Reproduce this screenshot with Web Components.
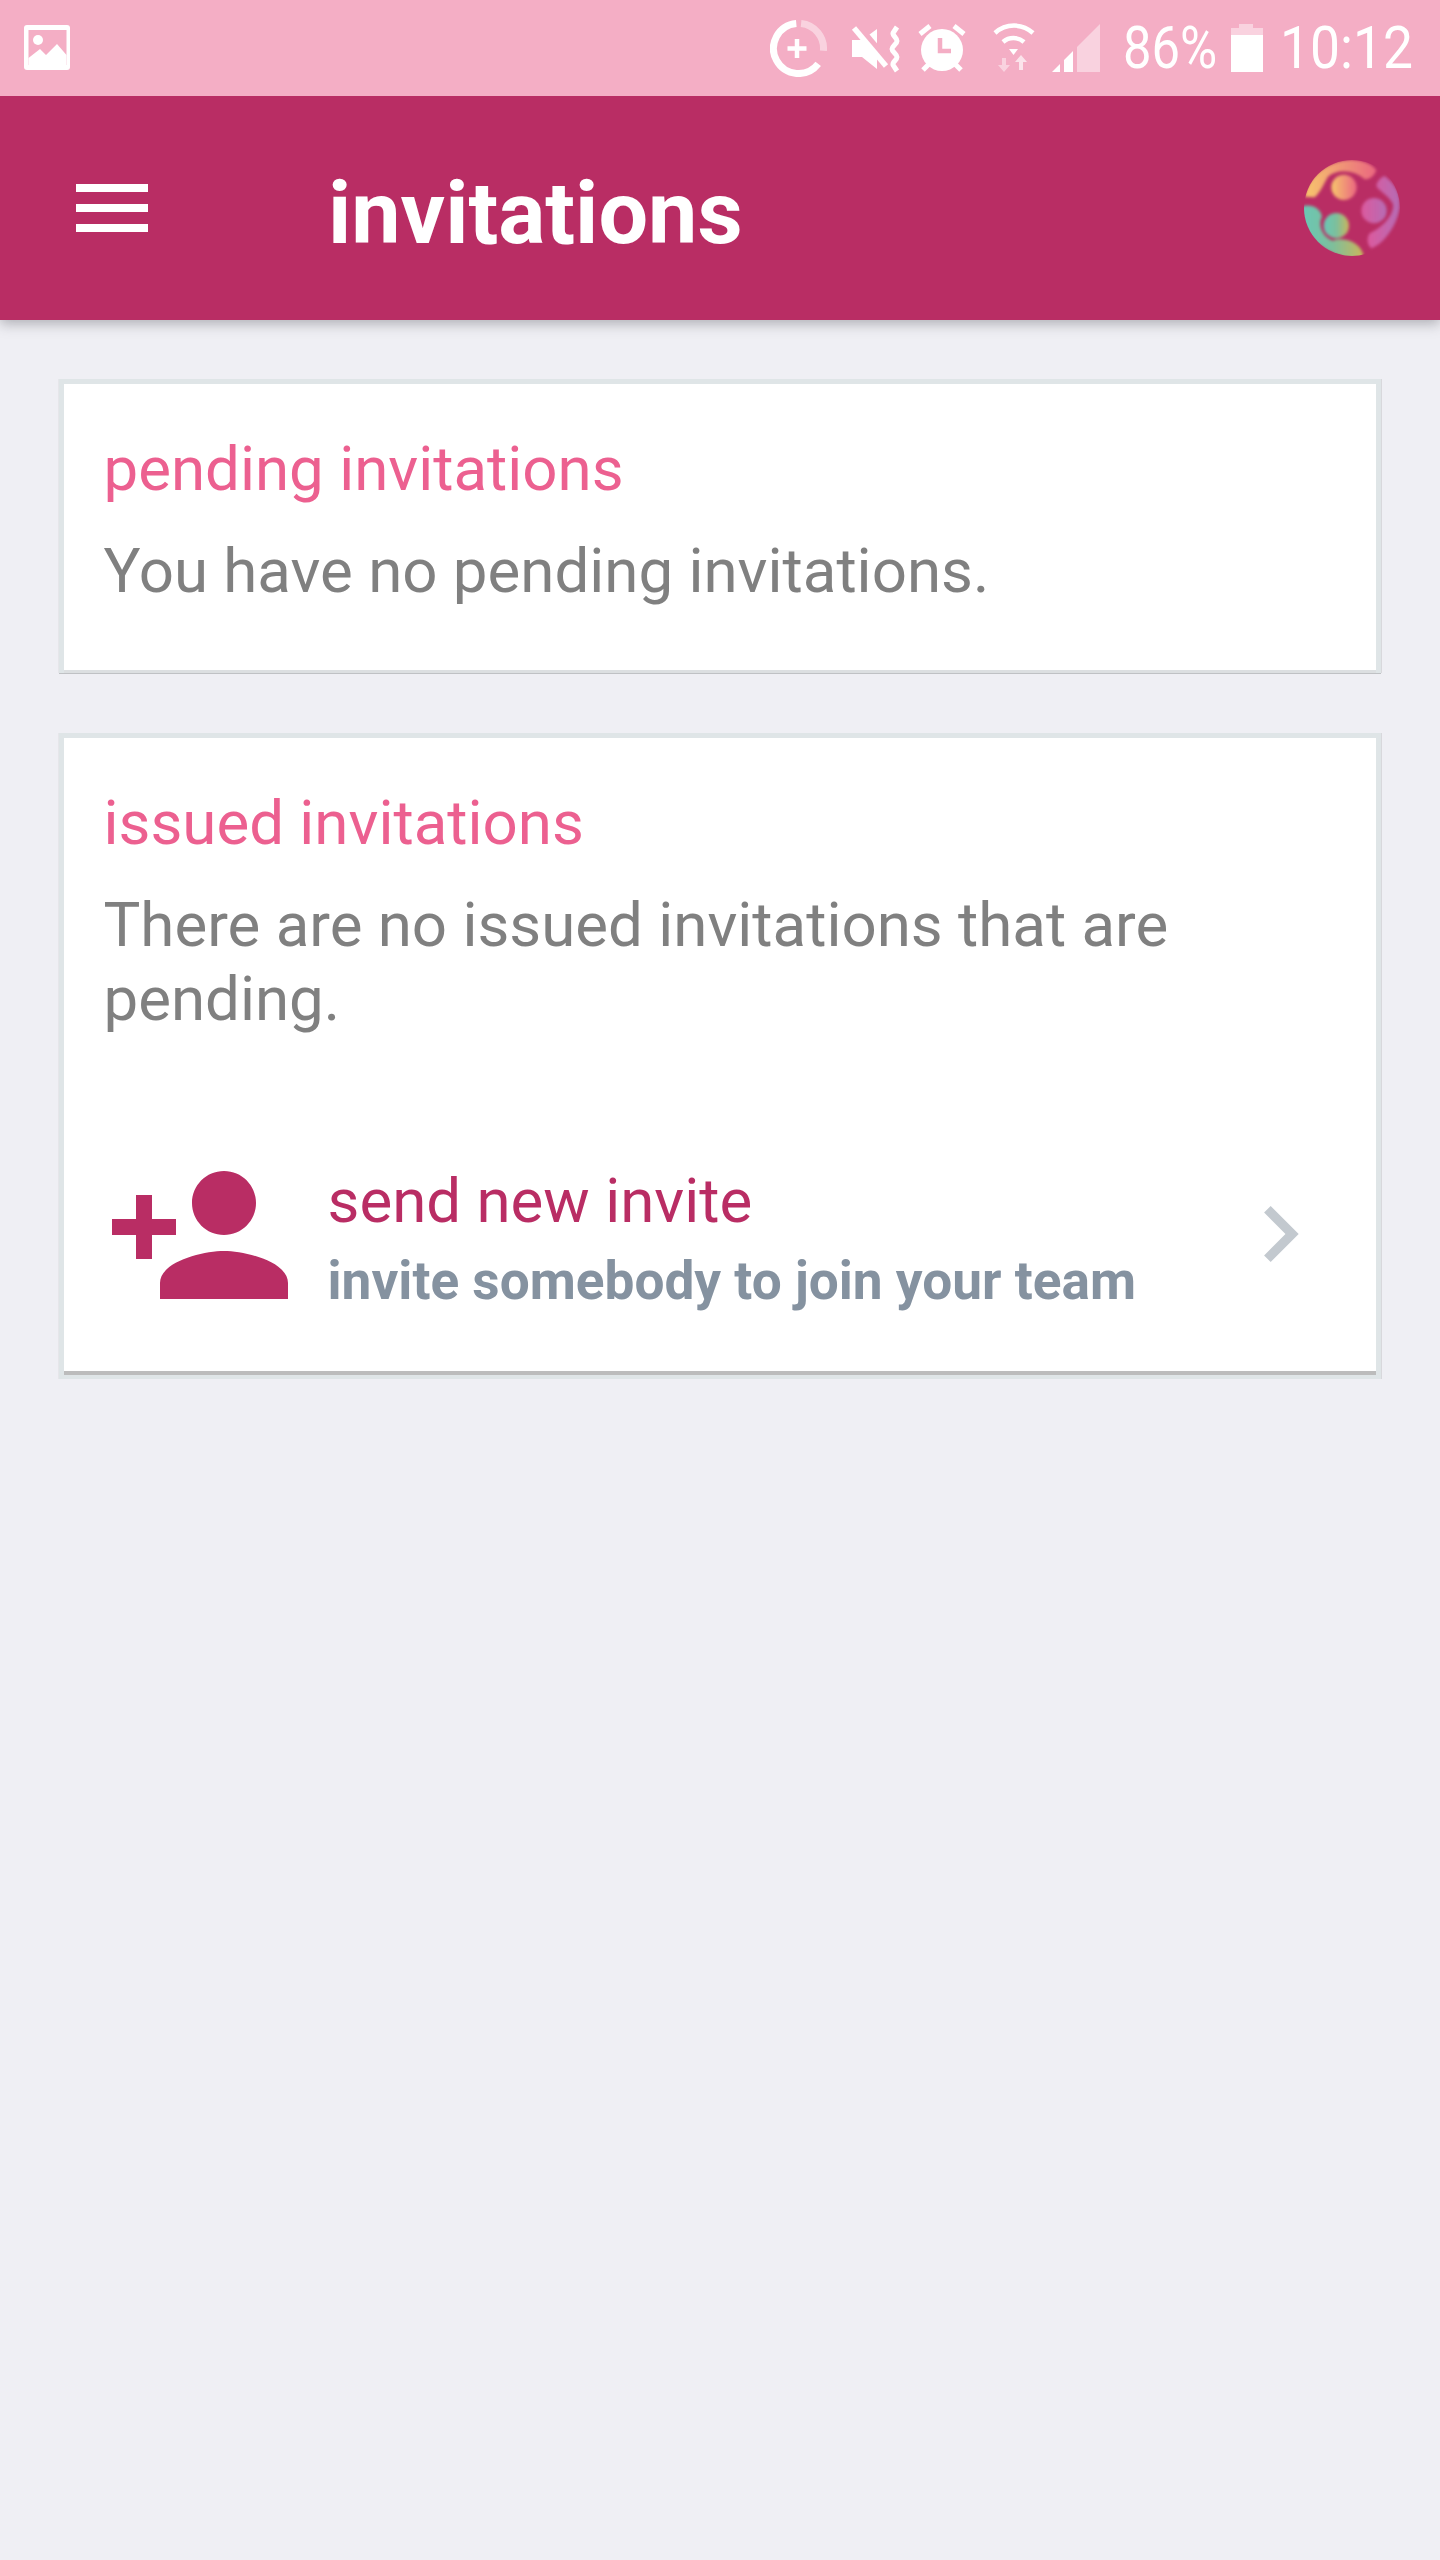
<!DOCTYPE html>
<html lang="en">
<head>
<meta charset="UTF-8">
<title>invitations</title>
<style>
  html, body { margin: 0; background: #efeff4; }
  body { min-height: 2560px; font-family: Roboto, "Liberation Sans", sans-serif; }
</style>
</head>
<body>

<template id="status-bar-tpl">
<style>
  :host { display: flex; align-items: flex-start; height: 96px; background: #f4aec5; color: #fff; position: relative; z-index: 1; }
  svg { display: block; flex: none; }
  .pic { margin: 25px 0 0 24px; }
  .right { margin-left: auto; display: flex; align-items: flex-start; }
  .sync { margin: 20px 24px 0 0; }
  .mute { margin: 25px 15px 0 0; }
  .alarm { margin: 24px 26px 0 0; }
  .wifi { margin: 22px 16px 0 0; }
  .signal { margin: 24px 23px 0 0; }
  .batt { margin: 24px 19px 0 14px; }
  .txt { font: 400 59px/96px Roboto, sans-serif; white-space: nowrap; height: 96px; transform-origin: left top; }
  .pct { width: 94px; transform: scaleX(.86); }
  .time { width: 131px; margin-right: 29px; transform: scaleX(.905); margin-left: -2px; }
</style>
<svg class="pic" width="46" height="45" viewBox="0 0 46 45">
  <rect width="46" height="45" rx="3" fill="#fff"/>
  <rect x="4.5" y="5" width="38" height="35" fill="#f4aec5"/>
  <circle cx="14" cy="15" r="5" fill="#fff"/>
  <path d="M4.5 33 16 24l6 6 11-11 9.5 11v11h-38z" fill="#fff"/>
</svg>
<div class="right">
  <svg class="sync" width="57" height="57" viewBox="0 0 57 57" fill="none" stroke="#fff">
    <path d="M26.3 3.6A25 25 0 1 0 48.2 43.9" stroke-width="7"/>
    <path d="M31.1 3.6A25 25 0 0 1 53.4 30.7" stroke-width="7" stroke-opacity=".45"/>
    <path d="M27 19v19M17.500 28.500h19" stroke-width="4.500"/>
  </svg>
  <svg class="mute" width="52" height="48" viewBox="0 0 52 48">
    <path d="M1 15h10L26 4v40L11 32H1z" fill="#fff"/>
    <path d="M7 2l32 38" stroke="#f4aec5" stroke-width="8" fill="none"/>
    <path d="M3 3l32 38" stroke="#fff" stroke-width="5.500" fill="none"/>
    <path d="M46 2l-4 6c-1 2 4 5 4 8s-5 5-5 8 5 5 5 8-5 5-4 8l4 6" stroke="#fff" stroke-width="5" fill="none"/>
  </svg>
  <svg class="alarm" width="48" height="48" viewBox="0 0 48 48">
    <circle cx="24" cy="26" r="21" fill="#fff"/>
    <path d="M2 10 12 2M36 2l10 8M5 46l6-6M43 46l-6-6" stroke="#fff" stroke-width="5" fill="none"/>
    <path d="M22 14v13h11" stroke="#f4aec5" stroke-width="4.500" fill="none"/>
  </svg>
  <svg class="wifi" width="44" height="50" viewBox="0 0 44 50">
    <path d="M3 11A28 28 0 0 1 41 11M11 20A16 16 0 0 1 32 20" stroke="#fff" stroke-width="4.500" fill="none"/>
    <path d="M17 27h9l-4.500 6z" fill="#fff"/>
    <path d="M10 36h4v7h4l-6 7-6-7h4z" fill="#fff" fill-opacity=".45"/>
    <path d="M29 33l6 7h-4v8h-4v-8h-4z" fill="#fff" fill-opacity=".65"/>
  </svg>
  <svg class="signal" width="48" height="48" viewBox="0 0 48 48">
    <path d="M25 48V23L48 0v48z" fill="#fff" fill-opacity=".45"/>
    <path d="M12 48V36l9-9v21zM0 48l8-8v8z" fill="#fff"/>
  </svg>
  <div class="txt pct">86%</div>
  <svg class="batt" width="32" height="48" viewBox="0 0 32 48">
    <path d="M8 0h14v4h10v8H0V4h8z" fill="#fff" fill-opacity=".45"/>
    <rect y="11" width="32" height="37" fill="#fff"/>
  </svg>
  <div class="txt time">10:12</div>
</div>
</template>

<template id="app-bar-tpl">
<style>
  :host { display: flex; align-items: center; height: 224px; background: #b92d64; color: #fff; box-shadow: 0 4px 12px rgba(60, 60, 70, .35); }
  .menu { margin-left: 76px; width: 72px; display: flex; flex-direction: column; gap: 12px; }
  .menu i { display: block; height: 8px; background: #fff; }
  h1 { margin: 9px 0 0 180px; font: 700 88px/1 Roboto, sans-serif; }
  ::slotted(team-logo) { margin: 0 40px 0 auto; }
</style>
<div class="menu"><i></i><i></i><i></i></div>
<h1><slot name="title"></slot></h1>
<slot name="logo"></slot>
</template>

<template id="team-logo-tpl">
<style>
  :host { display: block; width: 96px; height: 96px; }
  svg { display: block; }
</style>
<svg width="96" height="96" viewBox="28 30 288 288">
  <defs>
    <linearGradient id="a" x1="0" x2="1" y1="0" y2="0"><stop offset="0" stop-color="#f7c66c"/><stop offset="1" stop-color="#ea6680"/></linearGradient>
    <linearGradient id="b" x1="0" x2="1" y1="0" y2="0"><stop offset="0" stop-color="#dc5a9e"/><stop offset="1" stop-color="#b56cb4"/></linearGradient>
    <linearGradient id="c" x1="0" x2="1" y1="0" y2="0"><stop offset="0" stop-color="#69c7b6"/><stop offset=".5" stop-color="#7cbf9c"/><stop offset="1" stop-color="#c9b65c"/></linearGradient>
    <filter id="soft" x="-10%" y="-10%" width="120%" height="120%"><feGaussianBlur stdDeviation="5"/></filter>
    <clipPath id="disc"><circle cx="172" cy="174" r="144"/></clipPath>
  </defs>
  <g clip-path="url(#disc)">
    <g filter="url(#soft)">
      <path d="M30 140C40 80 100 30 170 30c30 0 60 10 75 30-5 18-20 28-35 28-30-30-85-32-110-8-12 20-22 45-40 62z" fill="url(#a)"/>
      <circle cx="148" cy="112" r="38" fill="url(#a)"/>
      <path d="M270 78c30 22 48 52 45 92-5 50-45 110-85 125-12-10-15-30-5-45 35-15 75-55 70-88-15-30-50-42-50-57 5-15 15-23 25-27z" fill="url(#b)"/>
      <circle cx="238" cy="182" r="38" fill="url(#b)"/>
      <path d="M20 170c30-10 58 5 62 30-14 25 3 62 33 72 25-10 75-2 90 38v15h-45C100 310 40 270 20 215z" fill="url(#c)"/>
      <circle cx="125" cy="227" r="38" fill="url(#c)"/>
    </g>
  </g>
</svg>
</template>

<template id="info-card-tpl">
<style>
  :host { display: block; background: #dfe5e7; padding: 5px 5px 0; box-shadow: 0 1px 0 #bfc1c4, 1px 0 0 #d8d8dc, -1px 0 0 #e6e6ea; }
  .inner { background: #fff; border-bottom: 3px solid #dcdfe1; padding: 47px 39.500px 62px; }
  :host([strong]) { padding-bottom: 4px; box-shadow: 1px 0 0 #d8d8dc, -1px 0 0 #e6e6ea; }
  :host([strong]) .inner { border-bottom: 4px solid #bcbcbc; padding-bottom: 0; }
  h2 { margin: 0 0 27px; font: 400 61.800px/76px Roboto, sans-serif; color: #ec6090; }
  p { margin: 0; font: 400 61.800px/74px Roboto, sans-serif; color: #808080; }
</style>
<div class="inner">
  <h2><slot name="title"></slot></h2>
  <p><slot></slot></p>
  <slot name="action"></slot>
</div>
</template>

<template id="invite-row-tpl">
<style>
  :host { display: flex; align-items: flex-start; margin: 0 -39.500px; height: 335px; }
  .icon { flex: none; display: block; margin: 103px 0 0 40px; fill: #b92d64; }
  .txt { flex: 1; margin: 129px 0 0 31.500px; }
  .main { font: 400 61.800px/72px Roboto, sans-serif; color: #b92d64; }
  .sub { font: 700 53.200px/70px Roboto, sans-serif; color: #8592a0; margin-top: 9px; }
  .chev { flex: none; display: block; margin: 142px 40px 0 0; fill: #c3c9cf; }
</style>
<svg class="icon" width="192" height="192" viewBox="0 0 24 24">
  <path d="M15 12c2.210 0 4-1.790 4-4s-1.790-4-4-4-4 1.790-4 4 1.790 4 4 4zm-9-2V7H4v3H1v2h3v3h2v-3h3v-2H6zm9 4c-2.670 0-8 1.340-8 4v2h16v-2c0-2.660-5.330-4-8-4z"/>
</svg>
<div class="txt">
  <div class="main"><slot name="main"></slot></div>
  <div class="sub"><slot name="sub"></slot></div>
</div>
<svg class="chev" width="112" height="112" viewBox="0 0 24 24">
  <path d="M10 6 8.590 7.410 13.170 12l-4.580 4.590L10 18l6-6z"/>
</svg>
</template>

<template id="invite-page-tpl">
<style>
  :host { display: block; }
  main { display: flex; flex-direction: column; gap: 60px; padding: 59px; }
</style>
<slot name="head"></slot>
<main><slot></slot></main>
</template>

<invite-page>
  <status-bar slot="head"></status-bar>
  <app-bar slot="head">
    <span slot="title">invitations</span>
    <team-logo slot="logo"></team-logo>
  </app-bar>
  <info-card>
    <span slot="title">pending invitations</span>
    You have no pending invitations.
  </info-card>
  <info-card strong>
    <span slot="title">issued invitations</span>
    There are no issued invitations that are pending.
    <invite-row slot="action">
      <span slot="main">send new invite</span>
      <span slot="sub">invite somebody to join your team</span>
    </invite-row>
  </info-card>
</invite-page>

<script>
// every element is just its template in an open shadow root
function simple(tag, tplId) {
  customElements.define(tag, class extends HTMLElement {
    constructor() {
      super();
      let root = this.attachShadow({ mode: "open" });
      root.appendChild(document.getElementById(tplId).content.cloneNode(true));
    }
  });
}

simple("status-bar", "status-bar-tpl");
simple("app-bar", "app-bar-tpl");
simple("team-logo", "team-logo-tpl");
simple("info-card", "info-card-tpl");
simple("invite-row", "invite-row-tpl");
simple("invite-page", "invite-page-tpl");
</script>
</body>
</html>
